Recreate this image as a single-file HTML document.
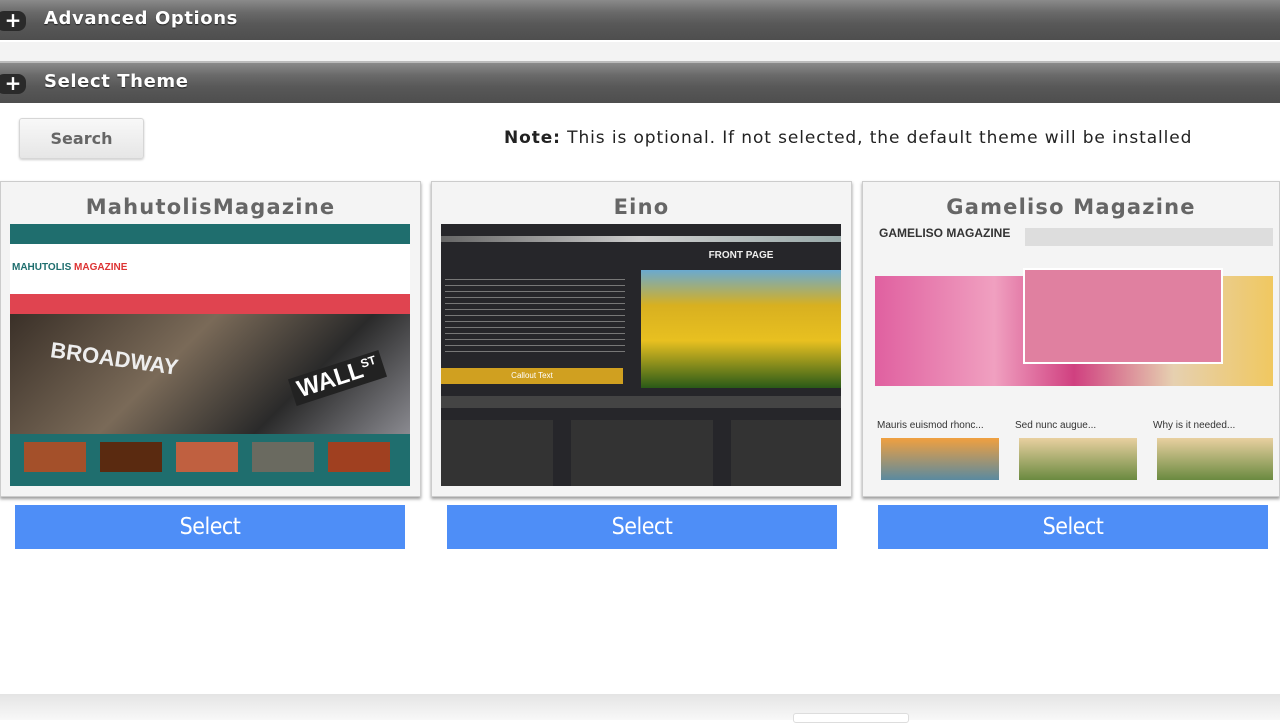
<!DOCTYPE html>
<html><head><style>
*{margin:0;padding:0;box-sizing:border-box}
body{width:1280px;height:720px;overflow:hidden;background:#fff;font-family:"DejaVu Sans","Liberation Sans",sans-serif;position:relative}
.bar{position:absolute;left:0;width:1280px;height:40px;background:linear-gradient(#8a8a8a,#6a6a6a 30%,#585858 60%,#4e4e4e);color:#fff;font-weight:bold;font-size:18px;letter-spacing:.6px}
.bar .t{position:absolute;left:44px;top:8px;text-shadow:0 1px 1px #222}
.bar .p{position:absolute;left:-4px;top:11px;width:30px;height:20px;background:#2a2a2a;border-radius:8px;color:#fff;font-size:20px;line-height:19px;text-align:center;padding-left:4px;letter-spacing:0}
.a{position:absolute}
.card{position:absolute;top:181px;height:316px;background:#f4f4f4;border:1px solid #ccc;box-shadow:0 2px 3px #999}
.card h3{position:absolute;top:13px;width:100%;text-align:center;font-size:21px;color:#666;font-weight:bold;letter-spacing:1.2px}
.img{position:absolute;top:42px;left:9px;width:400px;height:262px;overflow:hidden;font-family:"Liberation Sans",sans-serif;letter-spacing:0}
.sel{position:absolute;top:505px;height:44px;width:390px;background:#4e8ef7;color:#fff;font-size:23px;text-align:center;line-height:44px;font-family:"DejaVu Sans Condensed","DejaVu Sans",sans-serif;letter-spacing:-.5px}
</style></head><body>
<div class="bar" style="top:0"><span class="p">+</span><span class="t">Advanced Options</span></div>
<div class="a" style="top:40px;left:0;width:1280px;height:23px;background:#f3f3f3;border-top:2px solid #fff;border-bottom:2px solid #bbb"></div>
<div class="bar" style="top:63px"><span class="p">+</span><span class="t">Select Theme</span></div>
<div class="a" style="left:19px;top:118px;width:125px;height:41px;background:linear-gradient(#f8f8f8,#e6e6e6);border:1px solid #d6d6d6;border-radius:3px;box-shadow:0 1px 2px #ccc;color:#666;font-weight:bold;font-size:16px;text-align:center;line-height:39px">Search</div>
<div class="a" style="left:504px;top:128px;font-size:17px;color:#222;letter-spacing:.9px;white-space:nowrap"><b>Note:</b> This is optional. If not selected, the default theme will be installed</div>

<div class="card" style="left:0;width:421px"><h3>MahutolisMagazine</h3>
<div class="img" style="background:#fff">
<div class="a" style="top:0;left:0;width:400px;height:20px;background:#1f6e6e"></div>
<div class="a" style="top:38px;left:2px;font-size:10px;font-weight:bold;color:#1f6e6e">MAHUTOLIS <span style="color:#d33">MAGAZINE</span></div>
<div class="a" style="top:70px;left:0;width:400px;height:20px;background:#e04450"></div>
<div class="a" style="top:90px;left:0;width:400px;height:120px;background:linear-gradient(135deg,#3a3028,#7a6a58 40%,#2a2a2a 70%,#8a8a90)"></div>
<div class="a" style="top:122px;left:40px;color:#eee;font-weight:bold;font-size:22px;transform:rotate(8deg)">BROADWAY</div>
<div class="a" style="top:140px;left:280px;color:#fff;font-weight:bold;font-size:24px;background:#222;padding:0 6px;transform:rotate(-18deg)">WALL<sup style="font-size:12px">ST</sup></div>
<div class="a" style="top:210px;left:0;width:400px;height:52px;background:#1f6e6e"></div>
<div class="a" style="top:218px;left:14px;width:62px;height:30px;background:#a4502a"></div>
<div class="a" style="top:218px;left:90px;width:62px;height:30px;background:#5a2a10"></div>
<div class="a" style="top:218px;left:166px;width:62px;height:30px;background:#c06040"></div>
<div class="a" style="top:218px;left:242px;width:62px;height:30px;background:#6a6a60"></div>
<div class="a" style="top:218px;left:318px;width:62px;height:30px;background:#a04020"></div>
</div></div>

<div class="card" style="left:431px;width:421px"><h3>Eino</h3>
<div class="img" style="background:#26262a">
<div class="a" style="top:12px;left:0;width:400px;height:6px;background:linear-gradient(90deg,#666,#ccc,#9aa)"></div>
<div class="a" style="top:26px;left:200px;width:200px;font-size:10px;font-weight:bold;color:#eee;text-align:center">FRONT PAGE</div>
<div class="a" style="top:46px;left:200px;width:200px;height:118px;background:linear-gradient(#6aaad0,#d8b020 30%,#e8c020 60%,#2a5a18)"></div>
<div class="a" style="top:50px;left:4px;width:180px;height:80px;background:repeating-linear-gradient(#26262a 0 5px,#777 5px 6px)"></div>
<div class="a" style="top:144px;left:0;width:182px;height:16px;background:#d0a020;font-size:8px;color:#fff;text-align:center;line-height:16px">Callout Text</div>
<div class="a" style="top:172px;left:0;width:400px;height:12px;background:#444"></div>
<div class="a" style="top:196px;left:0;width:112px;height:66px;background:#333"></div>
<div class="a" style="top:196px;left:130px;width:142px;height:66px;background:#333"></div>
<div class="a" style="top:196px;left:290px;width:110px;height:66px;background:#333"></div>
</div></div>

<div class="card" style="left:862px;width:418px"><h3>Gameliso Magazine</h3>
<div class="img" style="left:10px;background:#f4f4f4">
<div class="a" style="top:2px;left:6px;font-size:12px;font-weight:bold;color:#333">GAMELISO MAGAZINE</div>
<div class="a" style="top:4px;left:152px;width:248px;height:18px;background:#ddd"></div>
<div class="a" style="top:52px;left:2px;width:398px;height:110px;background:linear-gradient(90deg,#e060a0,#f0a0c0 30%,#d04080 50%,#e6d0b0 75%,#f0c860)"></div>
<div class="a" style="top:44px;left:150px;width:200px;height:96px;background:#e080a0;border:2px solid #fff"></div>
<div class="a" style="top:196px;left:4px;font-size:10px;color:#333">Mauris euismod rhonc...</div>
<div class="a" style="top:196px;left:142px;font-size:10px;color:#333">Sed nunc augue...</div>
<div class="a" style="top:196px;left:280px;font-size:10px;color:#333">Why is it needed...</div>
<div class="a" style="top:214px;left:8px;width:118px;height:42px;background:linear-gradient(#f0a040,#5a8aa0)"></div>
<div class="a" style="top:214px;left:146px;width:118px;height:42px;background:linear-gradient(#e8d0a0,#6a8a40)"></div>
<div class="a" style="top:214px;left:284px;width:116px;height:42px;background:linear-gradient(#e8d0a0,#6a8a40)"></div>
</div></div>

<div class="sel" style="left:15px">Select</div>
<div class="sel" style="left:447px">Select</div>
<div class="sel" style="left:878px">Select</div>
<div class="a" style="top:694px;left:0;width:1280px;height:26px;background:linear-gradient(#e4e4e4,#f8f8f8)"></div>
<div class="a" style="top:713px;left:793px;width:116px;height:10px;background:#fff;border:1px solid #ddd;border-radius:3px"></div>
</body></html>
